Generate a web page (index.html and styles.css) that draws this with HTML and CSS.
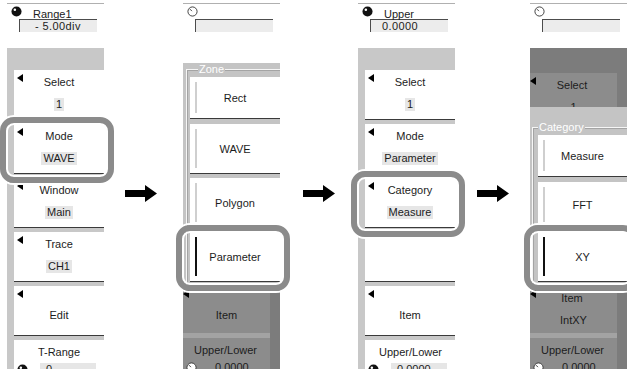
FILE: index.html
```html
<!DOCTYPE html>
<html lang="en">
<head>
  <meta charset="UTF-8" />
  <meta name="viewport" content="width=device-width, initial-scale=1" />
  <title>Measure setup: Mode, Zone, Category</title>
  <link rel="stylesheet" href="styles.css">
</head>
<body>

  <svg class="defs" width="0" height="0">
    <symbol id="ball" viewBox="0 0 12 12">
      <circle cx="6" cy="6" r="5.5" fill="#111" />
      <circle cx="4.2" cy="4" r="1.4" fill="#fff" />
    </symbol>
    <symbol id="dial" viewBox="0 0 12 12">
      <circle cx="6" cy="6" r="5" fill="#fff" stroke="#333" stroke-width="1" />
      <path d="M3.2 3.4 L5.4 5.6" stroke="#333" stroke-width="1" />
    </symbol>
    <symbol id="arrow" viewBox="0 0 32 17">
      <polygon points="0,5 20,5 20,0 32,8.5 20,17 20,12 0,12" fill="#000" />
    </symbol>
  </svg>

  <div class="figure">

    <!-- 1: mode key on the top menu -->
    <section class="panel">
      <div class="head">
        <div class="head-row">
          <svg class="knob"><use href="#ball" /></svg>
          <span class="caption">Range1</span>
        </div>
        <div class="readout">- 5.00div</div>
      </div>
      <div class="menu">
        <div class="key">
          <div class="key-top"><i class="tri"></i><span class="label">Select</span></div>
          <div class="value"><span>1</span></div>
        </div>
        <div class="key hl">
          <div class="key-top"><i class="tri"></i><span class="label">Mode</span></div>
          <div class="value"><span>WAVE</span></div>
        </div>
        <div class="key">
          <div class="key-top"><i class="tri"></i><span class="label">Window</span></div>
          <div class="value"><span>Main</span></div>
        </div>
        <div class="key">
          <div class="key-top"><i class="tri"></i><span class="label">Trace</span></div>
          <div class="value"><span>CH1</span></div>
        </div>
        <div class="key">
          <div class="key-top"><i class="tri"></i></div>
          <div class="label-mid">Edit</div>
        </div>
        <div class="key">
          <div class="key-top"><span class="label">T-Range</span></div>
          <div class="knob-row">
            <svg class="knob"><use href="#ball" /></svg>
            <span class="mini">0</span>
          </div>
        </div>
      </div>
    </section>

    <div class="gap gap-1"><svg class="arrow"><use href="#arrow" /></svg></div>

    <!-- 2: zone list -->
    <section class="panel">
      <div class="head">
        <div class="head-row">
          <svg class="knob"><use href="#dial" /></svg>
        </div>
        <div class="readout"></div>
      </div>
      <div class="menu menu-popup">
        <fieldset class="group">
          <legend>Zone</legend>
          <div class="opt short"><i class="bar"></i><span class="opt-label">Rect</span></div>
          <div class="opt"><i class="bar"></i><span class="opt-label">WAVE</span></div>
          <div class="opt"><i class="bar"></i><span class="opt-label">Polygon</span></div>
          <div class="opt sel hl"><i class="bar"></i><span class="opt-label">Parameter</span></div>
        </fieldset>
        <div class="dim">
          <div class="dkey">
            <div class="key-top"><i class="tri"></i></div>
            <div class="label-mid">Item</div>
          </div>
          <div class="dkey">
            <div class="key-top"><span class="label">Upper/Lower</span></div>
            <div class="knob-row">
              <svg class="knob"><use href="#dial" /></svg>
              <span class="mini">0.0000</span>
            </div>
          </div>
        </div>
      </div>
    </section>

    <div class="gap gap-2"><svg class="arrow"><use href="#arrow" /></svg></div>

    <!-- 3: category key -->
    <section class="panel">
      <div class="head">
        <div class="head-row">
          <svg class="knob"><use href="#ball" /></svg>
          <span class="caption">Upper</span>
        </div>
        <div class="readout readout-num">0.0000</div>
      </div>
      <div class="menu">
        <div class="key">
          <div class="key-top"><i class="tri"></i><span class="label">Select</span></div>
          <div class="value"><span>1</span></div>
        </div>
        <div class="key">
          <div class="key-top"><i class="tri"></i><span class="label">Mode</span></div>
          <div class="value"><span>Parameter</span></div>
        </div>
        <div class="key hl">
          <div class="key-top"><i class="tri"></i><span class="label">Category</span></div>
          <div class="value"><span>Measure</span></div>
        </div>
        <div class="key"></div>
        <div class="key">
          <div class="key-top"><i class="tri"></i></div>
          <div class="label-mid">Item</div>
        </div>
        <div class="key">
          <div class="key-top"><span class="label">Upper/Lower</span></div>
          <div class="knob-row">
            <svg class="knob"><use href="#ball" /></svg>
            <span class="mini">0.0000</span>
          </div>
        </div>
      </div>
    </section>

    <div class="gap gap-3"><svg class="arrow"><use href="#arrow" /></svg></div>

    <!-- 4: category list -->
    <section class="panel">
      <div class="head">
        <div class="head-row">
          <svg class="knob"><use href="#dial" /></svg>
        </div>
        <div class="readout"></div>
      </div>
      <div class="menu dim dim-top">
        <div class="dkey dkey-cut">
          <div class="key-top"><i class="tri"></i><span class="label">Select</span></div>
          <div class="value"><span>1</span></div>
        </div>
        <div class="popup">
          <fieldset class="group group-wide">
            <legend>Category</legend>
            <div class="opt short"><i class="bar"></i><span class="opt-label">Measure</span></div>
            <div class="opt mid"><i class="bar"></i><span class="opt-label">FFT</span></div>
            <div class="opt sel hl"><i class="bar"></i><span class="opt-label">XY</span></div>
          </fieldset>
        </div>
        <div class="dkey">
          <div class="key-top"><i class="tri"></i><span class="label">Item</span></div>
          <div class="value"><span>IntXY</span></div>
        </div>
        <div class="dkey">
          <div class="key-top"><span class="label">Upper/Lower</span></div>
          <div class="knob-row">
            <svg class="knob"><use href="#dial" /></svg>
            <span class="mini">0.0000</span>
          </div>
        </div>
      </div>
    </section>

  </div>

</body>
</html>
```

FILE: styles.css
```css
body {
  margin: 0;
  width: 627px;
  height: 369px;
  overflow: hidden;
  background: #fff;
  font-family: "Liberation Sans", Arial, sans-serif;
  font-size: 11px;
  color: #1c1c1c;
}
.defs {
  position: absolute;
}
.figure {
  display: flex;
  align-items: flex-start;
  padding-left: 7px;
}
.panel {
  width: 97px;
  flex: none;
  margin-top: 3px;
}

/* arrows between the steps */
.gap {
  flex: none;
  display: flex;
  justify-content: center;
  padding-top: 185px;
}
.gap-1 { width: 79px; padding-right: 5px; box-sizing: border-box; }
.gap-2 { width: 78px; }
.gap-3 { width: 75px; }
.arrow {
  width: 32px;
  height: 17px;
}

/* knob + readout at the top of each menu */
.head {
  height: 45px;
  box-sizing: border-box;
  border-top: 1px solid #b0b0b0;
  padding-top: 4px;
  background: #fff;
}
.head-row {
  display: flex;
  height: 12px;
  line-height: 12px;
}
.knob {
  width: 11px;
  height: 11px;
  flex: none;
  margin: -2px 0 0 4px;
}
.caption {
  margin-left: 11px;
}
.readout {
  margin: -1px 0 0 12px;
  width: 78px;
  height: 13px;
  box-sizing: border-box;
  border-top: 1px solid #4c4c4c;
  border-left: 1px solid #4c4c4c;
  background: #ececec;
  line-height: 12px;
  padding-left: 15px;
  letter-spacing: 0.4px;
}
.readout-num {
  padding-left: 11px;
}

/* soft keys */
.menu {
  background: #c8c8c8;
  padding: 22px 0 0 7px;
}
.key {
  position: relative;
  height: 49px;
  background: #fff;
  border-bottom: 1px solid #3a3a3a;
  margin-bottom: 4px;
}
.key-top {
  display: grid;
  grid-template-columns: 14px 1fr 14px;
  align-items: start;
  padding-top: 5px;
  line-height: 14px;
  height: 14px;
}
.tri {
  width: 0;
  height: 0;
  border-right: 6px solid #000;
  border-top: 4px solid transparent;
  border-bottom: 4px solid transparent;
  margin: -1px 0 0 3px;
}
.label {
  grid-column: 2;
  text-align: center;
  white-space: nowrap;
}
.value {
  text-align: center;
  margin-top: 9px;
  line-height: 13px;
}
.value span {
  display: inline-block;
  background: #e6e6e6;
  padding: 0 2px;
}
.label-mid {
  text-align: center;
  margin-top: 3px;
  line-height: 14px;
}
.knob-row {
  display: flex;
  align-items: center;
  margin-top: 4px;
  line-height: 12px;
}
.knob-row .knob {
  margin: 0 0 0 3px;
}
.mini {
  margin-left: 12px;
  width: 50px;
  background: #e6e6e6;
  padding-left: 6px;
}

/* selection frame drawn over the key */
.hl::after {
  content: "";
  position: absolute;
  left: -14px;
  right: -10px;
  top: -7px;
  bottom: -10px;
  border: 6px solid #8b8b8b;
  border-radius: 14px;
  box-shadow: 0 0 0 2px #fff, inset 0 0 0 2px #fff;
  z-index: 2;
  pointer-events: none;
}

/* pop-up option lists */
.menu-popup {
  background: #c4c4c4;
  padding: 0;
}
.group {
  margin: 15px 0 0 3px;
  padding: 2px 0 0 3px;
  border: 0;
  border-top: 1px solid #f6f6f6;
  border-left: 1px solid #f6f6f6;
  box-shadow: inset 1px 1px 0 #a4a4a4;
  min-width: 0;
}
.group legend {
  color: #fff;
  background: #c4c4c4;
  line-height: 12px;
  padding: 0 1px;
  margin-left: 8px;
}
.opt {
  position: relative;
  display: flex;
  align-items: center;
  height: 49px;
  background: #fff;
  border-bottom: 1px solid #3a3a3a;
  margin-bottom: 4px;
}
.opt.short {
  height: 41px;
  margin-bottom: 5px;
}
.opt.mid {
  height: 45px;
}
.bar {
  align-self: stretch;
  flex: none;
  width: 2px;
  margin: 5px 0 5px 5px;
  background: #cfcfcf;
}
.opt.sel .bar {
  background: #111;
}
.opt-label {
  flex: 1;
  text-align: center;
  margin-right: 7px;
}
.popup {
  background: #c4c4c4;
  padding-top: 1px;
}
.group-wide {
  margin: 13px 0 0 2px;
  padding-left: 5px;
}
.group-wide legend {
  margin-left: 0;
}

/* greyed-out keys behind a pop-up */
.dim {
  background: #7c7c7c;
}
.dim-top {
  padding: 25px 0 0 0;
}
.dkey {
  position: relative;
  width: 87px;
  height: 47px;
  overflow: hidden;
  background: #8c8c8c;
  border-bottom: 5px solid #a3a3a3;
}
.dkey .key-top {
  grid-template-columns: 11px 1fr 14px;
}
.dkey .tri {
  margin-left: 0;
}
.dkey .value span,
.dkey .mini {
  background: transparent;
}
.dkey-cut {
  height: 34px;
  border-bottom: 0;
}
```
